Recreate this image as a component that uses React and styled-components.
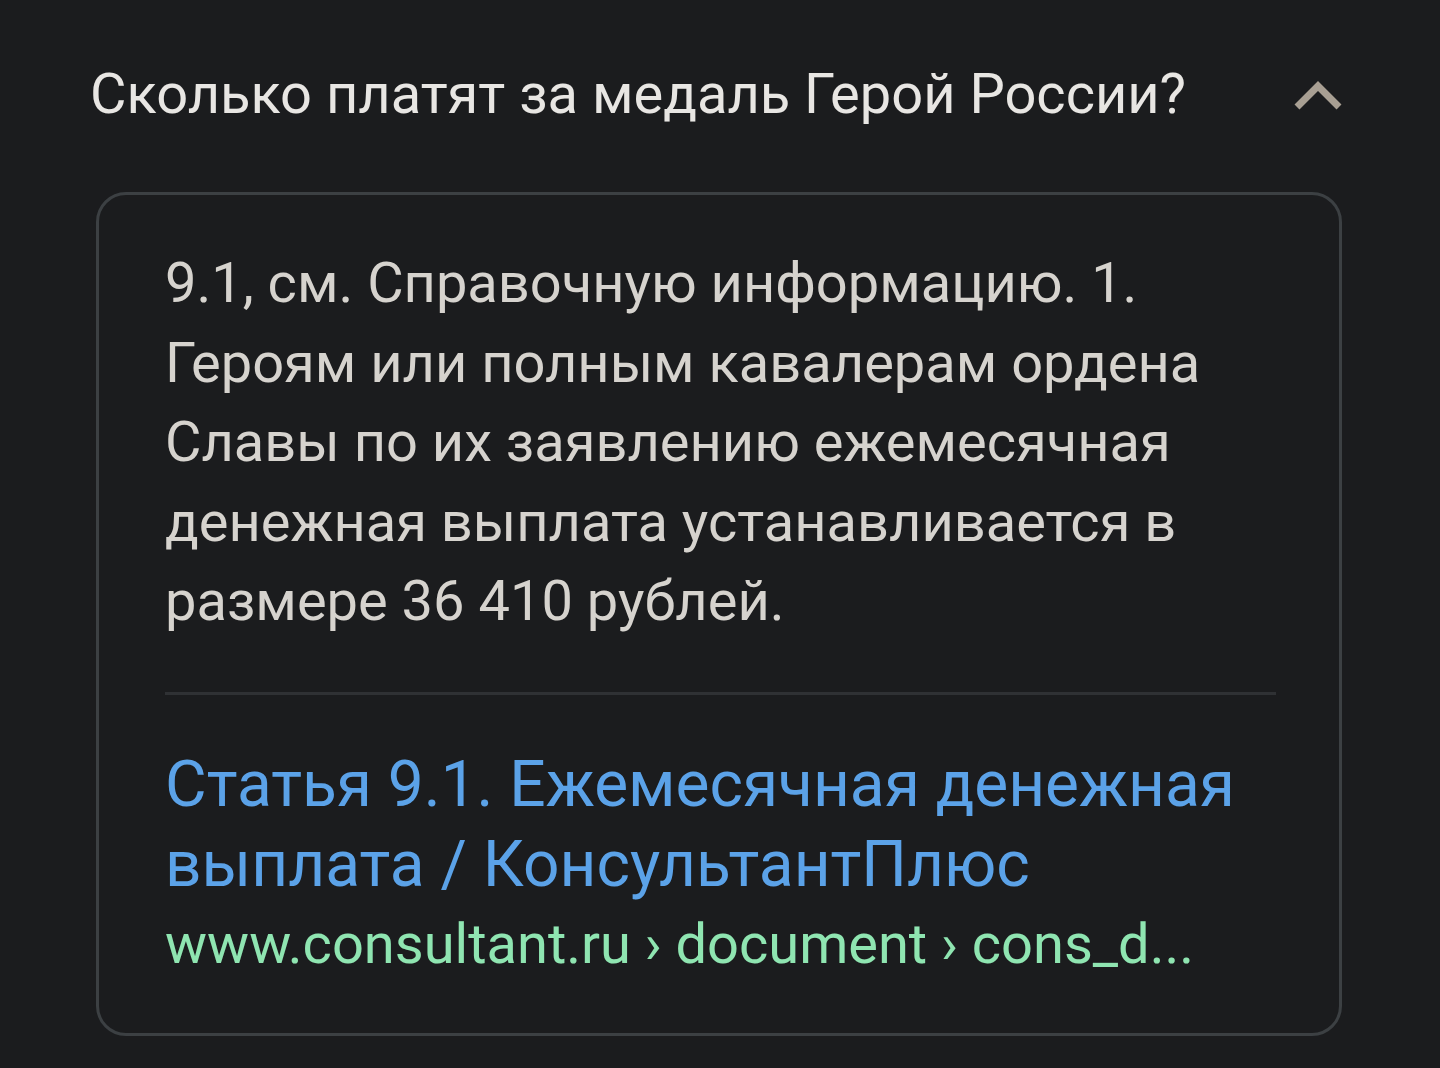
import React from 'react';
import styled, { createGlobalStyle } from 'styled-components';

const GlobalStyle = createGlobalStyle`
  html, body {
    margin: 0;
    padding: 0;
    background: #1b1c1e;
  }
  body {
    font-family: Roboto, "Noto Sans", "Liberation Sans", sans-serif;
    -webkit-font-smoothing: antialiased;
  }
`;

const Page = styled.div`
  width: 1440px;
  min-height: 1068px;
  background: #1b1c1e;
  box-sizing: border-box;
  padding-top: 59px;
`;

const Header = styled.div`
  display: flex;
  align-items: center;
  justify-content: space-between;
  padding: 0 97px 0 90px;
`;

const Question = styled.h2`
  margin: 0;
  font-size: 56px;
  font-weight: 400;
  line-height: 71px;
  color: #e8e6e3;
`;

const Toggle = styled.button`
  display: flex;
  align-items: center;
  justify-content: center;
  padding: 0;
  border: 0;
  background: transparent;
  color: #a89f93;
  cursor: pointer;
`;

const Card = styled.div`
  margin: 62px 98px 0 96px;
  border: 3px solid #3c4043;
  border-radius: 30px;
  padding: 49px 63px 59px 66px;
`;

const Snippet = styled.p`
  margin: 0;
  font-size: 56px;
  line-height: 79.5px;
  color: #d6d3ce;
`;

const Divider = styled.hr`
  margin: 50px 0 50px;
  border: 0;
  height: 3px;
  background: #2f3134;
`;

const LinkTitle = styled.a`
  display: block;
  font-size: 64px;
  line-height: 80px;
  color: #5ba2e8;
  text-decoration: none;
`;

const Url = styled.div`
  margin-top: 9px;
  font-size: 56px;
  line-height: 60px;
  color: #8fe5b1;
  white-space: nowrap;
`;

const ChevronUp = () => (
  <svg width="50" height="32" viewBox="0 0 50 32" fill="none">
    <polyline
      points="4,28 25,7 46,28"
      stroke="currentColor"
      strokeWidth="7"
      strokeLinecap="butt"
      strokeLinejoin="miter"
    />
  </svg>
);

export default function App() {
  return (
    <Page>
      <GlobalStyle />
      <Header>
        <Question>Сколько платят за медаль Герой России?</Question>
        <Toggle aria-label="Свернуть">
          <ChevronUp />
        </Toggle>
      </Header>
      <Card>
        <Snippet>
          9.1, см. Справочную информацию. 1. Героям или полным кавалерам ордена
          Славы по их заявлению ежемесячная денежная выплата устанавливается в
          размере 36 410 рублей.
        </Snippet>
        <Divider />
        <LinkTitle href="#">
          Статья 9.1. Ежемесячная денежная выплата / КонсультантПлюс
        </LinkTitle>
        <Url>www.consultant.ru › document › cons_d...</Url>
      </Card>
    </Page>
  );
}
